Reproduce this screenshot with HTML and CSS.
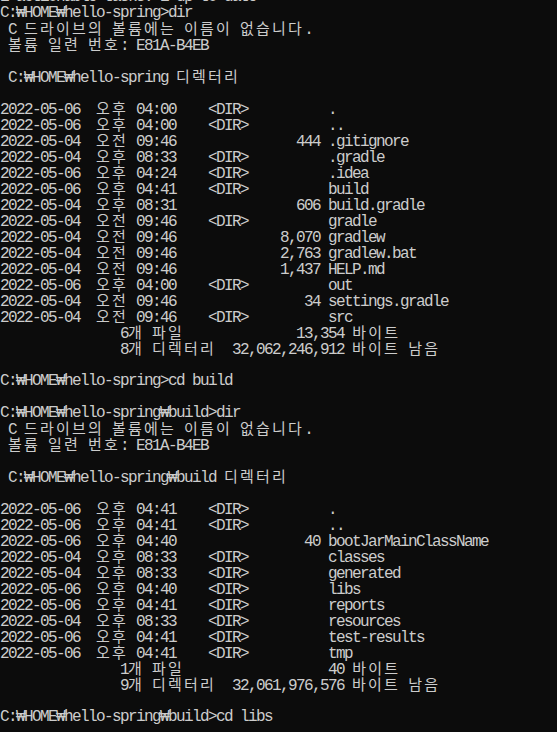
FILE: index.html
```html
<!DOCTYPE html>
<html lang="ko">
<head>
  <meta charset="utf-8" />
  <link rel="stylesheet" href="styles.css">
  <title>명령 프롬프트</title>
</head>
<body>
  <div class="console">
    <div class="ln">1 actionable tasks: 1 up-to-date</div>
    <div class="ln">C:₩HOME₩hello-spring&gt;dir</div>
    <div class="ln"> C <span class="ko">드라이브의</span> <span class="ko">볼륨에는</span> <span class="ko">이름이</span> <span class="ko">없습니다</span>.</div>
    <div class="ln"> <span class="ko">볼륨</span> <span class="ko">일련</span> <span class="ko">번호</span>: E81A-B4EB</div>
    <div class="ln"></div>
    <div class="ln"> C:₩HOME₩hello-spring <span class="ko">디렉터리</span></div>
    <div class="ln"></div>
    <div class="ln">2022-05-06  <span class="ko">오후</span> 04:00    &lt;DIR&gt;          .</div>
    <div class="ln">2022-05-06  <span class="ko">오후</span> 04:00    &lt;DIR&gt;          ..</div>
    <div class="ln">2022-05-04  <span class="ko">오전</span> 09:46               444 .gitignore</div>
    <div class="ln">2022-05-04  <span class="ko">오후</span> 08:33    &lt;DIR&gt;          .gradle</div>
    <div class="ln">2022-05-06  <span class="ko">오후</span> 04:24    &lt;DIR&gt;          .idea</div>
    <div class="ln">2022-05-06  <span class="ko">오후</span> 04:41    &lt;DIR&gt;          build</div>
    <div class="ln">2022-05-04  <span class="ko">오후</span> 08:31               606 build.gradle</div>
    <div class="ln">2022-05-04  <span class="ko">오전</span> 09:46    &lt;DIR&gt;          gradle</div>
    <div class="ln">2022-05-04  <span class="ko">오전</span> 09:46             8,070 gradlew</div>
    <div class="ln">2022-05-04  <span class="ko">오전</span> 09:46             2,763 gradlew.bat</div>
    <div class="ln">2022-05-04  <span class="ko">오전</span> 09:46             1,437 HELP.md</div>
    <div class="ln">2022-05-06  <span class="ko">오후</span> 04:00    &lt;DIR&gt;          out</div>
    <div class="ln">2022-05-04  <span class="ko">오전</span> 09:46                34 settings.gradle</div>
    <div class="ln">2022-05-04  <span class="ko">오전</span> 09:46    &lt;DIR&gt;          src</div>
    <div class="ln">               6<span class="ko">개</span> <span class="ko">파일</span>              13,354 <span class="ko">바이트</span></div>
    <div class="ln">               8<span class="ko">개</span> <span class="ko">디렉터리</span>  32,062,246,912 <span class="ko">바이트</span> <span class="ko">남음</span></div>
    <div class="ln"></div>
    <div class="ln">C:₩HOME₩hello-spring&gt;cd build</div>
    <div class="ln"></div>
    <div class="ln">C:₩HOME₩hello-spring₩build&gt;dir</div>
    <div class="ln"> C <span class="ko">드라이브의</span> <span class="ko">볼륨에는</span> <span class="ko">이름이</span> <span class="ko">없습니다</span>.</div>
    <div class="ln"> <span class="ko">볼륨</span> <span class="ko">일련</span> <span class="ko">번호</span>: E81A-B4EB</div>
    <div class="ln"></div>
    <div class="ln"> C:₩HOME₩hello-spring₩build <span class="ko">디렉터리</span></div>
    <div class="ln"></div>
    <div class="ln">2022-05-06  <span class="ko">오후</span> 04:41    &lt;DIR&gt;          .</div>
    <div class="ln">2022-05-06  <span class="ko">오후</span> 04:41    &lt;DIR&gt;          ..</div>
    <div class="ln">2022-05-06  <span class="ko">오후</span> 04:40                40 bootJarMainClassName</div>
    <div class="ln">2022-05-04  <span class="ko">오후</span> 08:33    &lt;DIR&gt;          classes</div>
    <div class="ln">2022-05-04  <span class="ko">오후</span> 08:33    &lt;DIR&gt;          generated</div>
    <div class="ln">2022-05-06  <span class="ko">오후</span> 04:40    &lt;DIR&gt;          libs</div>
    <div class="ln">2022-05-06  <span class="ko">오후</span> 04:41    &lt;DIR&gt;          reports</div>
    <div class="ln">2022-05-04  <span class="ko">오후</span> 08:33    &lt;DIR&gt;          resources</div>
    <div class="ln">2022-05-06  <span class="ko">오후</span> 04:41    &lt;DIR&gt;          test-results</div>
    <div class="ln">2022-05-06  <span class="ko">오후</span> 04:41    &lt;DIR&gt;          tmp</div>
    <div class="ln">               1<span class="ko">개</span> <span class="ko">파일</span>                  40 <span class="ko">바이트</span></div>
    <div class="ln">               9<span class="ko">개</span> <span class="ko">디렉터리</span>  32,061,976,576 <span class="ko">바이트</span> <span class="ko">남음</span></div>
    <div class="ln"></div>
    <div class="ln">C:₩HOME₩hello-spring₩build&gt;cd libs</div>
  </div>
</body>
</html>
```
FILE: styles.css
```css
html, body {
  margin: 0;
  background: #0c0c0c;
}
body {
  height: 732px;
  overflow: hidden;
}
.console {
  margin-top: -11px;
  color: #cccccc;
  font-family: "Liberation Mono", "DejaVu Sans Mono", "Noto Sans CJK KR", monospace;
  font-size: 16px;
  letter-spacing: -1.6px;
}
.ln {
  height: 16px;
  line-height: 16px;
  white-space: pre;
}
/* hangul cells are two columns wide: 15px * 0.92 + 2.2 = 16px */
.ko {
  font-family: "Noto Sans CJK KR", sans-serif;
  font-size: 15px;
  line-height: 14px;
  letter-spacing: 2.2px;
}
```
